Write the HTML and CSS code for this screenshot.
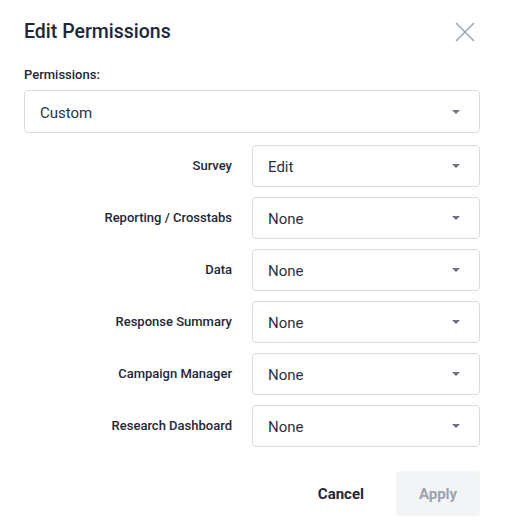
FILE: index.html
```html
<!DOCTYPE html>
<html lang="en">
<head>
<meta charset="utf-8">
<title>Edit Permissions</title>
<link rel="stylesheet" href="styles.css">
</head>
<body>
<div class="dialog">
  <div class="header">
    <h1 class="title">Edit Permissions</h1>
    <button class="close" aria-label="Close">
      <svg width="20" height="20" viewBox="0 0 20 20"><path d="M1 1 L19 19 M19 1 L1 19" stroke="#9aa4b1" stroke-width="1.5" fill="none"/></svg>
    </button>
  </div>
  <div class="field-label">Permissions:</div>
  <div class="select main-select">
    <span class="value">Custom</span>
    <span class="caret"></span>
  </div>
  <div class="rows">
    <div class="row-label">Survey</div>
    <div class="select"><span class="value">Edit</span><span class="caret"></span></div>
    <div class="row-label">Reporting / Crosstabs</div>
    <div class="select"><span class="value">None</span><span class="caret"></span></div>
    <div class="row-label">Data</div>
    <div class="select"><span class="value">None</span><span class="caret"></span></div>
    <div class="row-label">Response Summary</div>
    <div class="select"><span class="value">None</span><span class="caret"></span></div>
    <div class="row-label">Campaign Manager</div>
    <div class="select"><span class="value">None</span><span class="caret"></span></div>
    <div class="row-label">Research Dashboard</div>
    <div class="select"><span class="value">None</span><span class="caret"></span></div>
  </div>
  <div class="actions">
    <button class="btn btn-cancel">Cancel</button>
    <button class="btn btn-apply" disabled>Apply</button>
  </div>
</div>
</body>
</html>
```
FILE: styles.css
```css
html, body {
  margin: 0;
  padding: 0;
  background: #ffffff;
}
body {
  font-family: Roboto, "Liberation Sans", Arial, sans-serif;
  color: #1f2937;
}
.dialog {
  width: 511px;
  box-sizing: border-box;
  padding: 22px 31px 10px 24px;
}
.header {
  display: flex;
  align-items: center;
  justify-content: space-between;
  height: 20px;
}
.title {
  margin: 0;
  font-size: 19.5px;
  font-weight: 500;
  line-height: 20px;
  color: #1e2738;
}
.close {
  width: 20px;
  height: 20px;
  padding: 0;
  margin-right: 5px;
  border: 0;
  background: none;
  display: flex;
}
.field-label {
  margin-top: 25px;
  font-size: 13px;
  font-weight: 500;
  line-height: 16px;
  color: #1e2738;
}
.select {
  box-sizing: border-box;
  height: 42px;
  border: 1px solid #d9dde2;
  border-radius: 4px;
  display: flex;
  align-items: center;
  justify-content: space-between;
  padding: 2px 19px 0 15px;
  background: #fff;
}
.main-select {
  margin-top: 7px;
  height: 43px;
}
.value {
  font-size: 15px;
  color: #2a3342;
}
.caret {
  width: 0;
  height: 0;
  margin-top: -2px;
  border-left: 4px solid transparent;
  border-right: 4px solid transparent;
  border-top: 4px solid #6b7483;
}
.rows {
  margin-top: 12px;
  display: grid;
  grid-template-columns: 1fr 228px;
  column-gap: 20px;
  row-gap: 10px;
  align-items: center;
}
.row-label {
  text-align: right;
  font-size: 13px;
  font-weight: 500;
  color: #1e2738;
  line-height: 16px;
  margin-top: -1px;
}
.actions {
  margin-top: 24px;
  display: flex;
  justify-content: flex-end;
  gap: 16px;
}
.btn {
  height: 45px;
  border: 0;
  border-radius: 4px;
  font-family: Roboto, "Liberation Sans", Arial, sans-serif;
  font-size: 15px;
  font-weight: 700;
  background: none;
  padding: 0 16px;
}
.btn-cancel {
  color: #1e2738;
}
.btn-apply {
  width: 84px;
  padding: 0;
  background: #f3f4f6;
  color: #9ca3af;
}
```
